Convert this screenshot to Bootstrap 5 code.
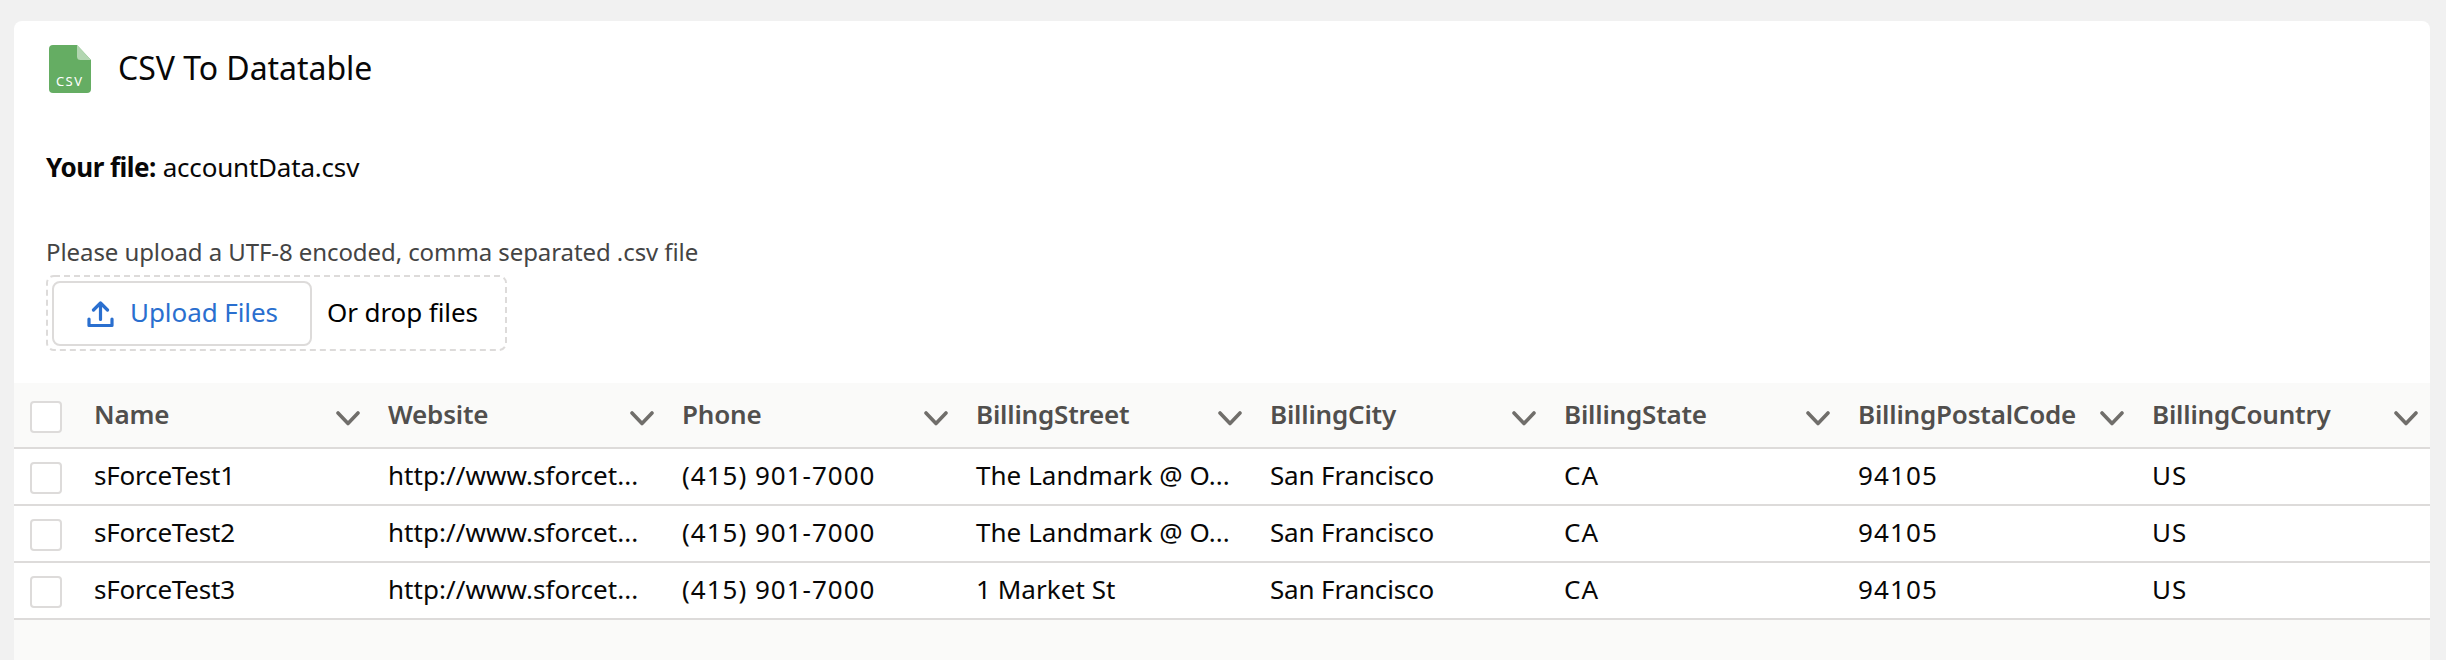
<!DOCTYPE html>
<html lang="en">
<head>
<meta charset="utf-8">
<meta name="viewport" content="width=device-width, initial-scale=1">
<title>CSV To Datatable</title>
<link href="https://cdn.jsdelivr.net/npm/bootstrap@5.3.0/dist/css/bootstrap.min.css" rel="stylesheet">
<style>
  body { background: #f1f1f1; font-family: "Noto Sans", sans-serif; font-size: 26px; line-height: 36px; color: #080707; overflow: hidden; }
  .panel { margin: 21px 16px 0 14px; height: 639px; border: 0; border-radius: 8px 8px 0 0; background: #fff; overflow: hidden; color: inherit; }
  .panel-head { height: 96px; padding: 24px 35px 0; gap: 27px; }
  .panel-title { font-size: 32px; line-height: 44px; font-weight: 400; margin: 1px 0 0; letter-spacing: -.03px; }
  .csv-label { font-size: 13px; letter-spacing: 1.4px; }
  .panel-main { height: 266px; padding: 32px 32px 0; }
  .file-tag { font-weight: 700; letter-spacing: -.5px; }
  .file-name { letter-spacing: -.2px; }
  .hint { font-size: 24px; line-height: 34px; color: #444; margin-top: 50px; letter-spacing: -.08px; }
  .dropzone { width: 461px; height: 76px; margin-top: 6px; }
  .dropzone > svg { z-index: 0; }
  .upload-btn { width: 260px; height: 65px; margin-left: 6px; border: 2px solid #dddbda; border-radius: 8px; background: #fff; color: #2a6fcf; font-size: 26px; line-height: 36px; padding: 0 0 2px 33px; gap: 16px; letter-spacing: -.07px; }
  .upload-btn svg { margin-top: 5px; }
  .drop-text { margin-left: 15px; padding-bottom: 2px; color: #000; letter-spacing: -.08px; }
  .grid-area { background: #fafaf9; flex: 1; }
  .data-grid { table-layout: fixed; margin: 0; color: #080707; border-collapse: separate; border-spacing: 0; --bs-table-bg: #fff; --bs-table-color: #080707; }
  .data-grid > :not(caption) > * > * { height: 57px; padding: 0 0 2px 16px; border-bottom: 2px solid #dddbda; white-space: nowrap; vertical-align: middle; box-shadow: none; }
  .data-grid > thead > tr > th { height: 66px; padding-bottom: 3px; background: #fafaf9; color: #514f4d; font-weight: 600; border-bottom-color: #dddbda; letter-spacing: -.2px; }
  .data-grid > tbody > tr > td { padding-bottom: 3px; letter-spacing: -.2px; }
  .data-grid .check-cell { padding: 3px 0 0 16px !important; line-height: 0; }
  .data-grid .form-check-input { width: 32px; height: 32px; margin: 0; border: 2px solid #dddbda; border-radius: 4px; background-color: #fff; float: none; }
  .chev { margin: 9px 11px 0 0; }
  .data-grid td.c-url, .data-grid td.c-street { letter-spacing: .05px; }
  .data-grid td.c-phone { letter-spacing: 1px; }
  .data-grid td.c-city { letter-spacing: -.15px; }
  .data-grid td.c-state, .data-grid td.c-country { letter-spacing: 1px; }
  .data-grid td.c-zip { letter-spacing: 1.1px; }
</style>
</head>
<body>
<svg class="d-none">
  <symbol id="chevron" viewBox="0 0 26 16"><path d="M3 3l10 10.500L23 3" fill="none" stroke="#706e6b" stroke-width="3.600" stroke-linecap="round" stroke-linejoin="round"/></symbol>
</svg>
<main class="card panel d-flex flex-column">
  <header class="panel-head d-flex align-items-start">
    <svg width="42" height="48" viewBox="0 0 42 48">
      <path d="M4 0H28L42 15V44a4 4 0 0 1-4 4H4a4 4 0 0 1-4-4V4a4 4 0 0 1 4-4z" fill="#65ad63"/>
      <path d="M28 0L42 15H31.500A3.500 3.500 0 0 1 28 11.500z" fill="#b2d6b1"/>
      <text class="csv-label" x="7" y="40.500" fill="#fff">CSV</text>
    </svg>
    <h1 class="panel-title">CSV To Datatable</h1>
  </header>
  <section class="panel-main">
    <div><strong class="file-tag">Your file:</strong> <span class="file-name">accountData.csv</span></div>
    <div class="hint">Please upload a UTF-8 encoded, comma separated .csv file</div>
    <div class="dropzone position-relative d-flex align-items-center">
      <svg class="position-absolute top-0 start-0" width="461" height="76"><rect x="1" y="1" width="459" height="74" rx="7" fill="none" stroke="#dddbda" stroke-width="2" stroke-dasharray="6 4"/></svg>
      <button type="button" class="btn upload-btn position-relative d-flex align-items-center">
        <svg width="27" height="27" viewBox="0 0 27 27" fill="none" stroke="#2a6fcf" stroke-linecap="round" stroke-linejoin="round">
          <path d="M6.500 9L13.500 2l7 7M13.500 2.500V18.500" stroke-width="3.200"/>
          <path d="M2 18V24.500H25V18" stroke-width="3.200"/>
        </svg>
        <span>Upload Files</span>
      </button>
      <span class="drop-text">Or drop files</span>
    </div>
  </section>
  <section class="grid-area">
    <table class="table data-grid">
      <colgroup><col style="width:64px"><col span="8"></colgroup>
      <thead><tr id="heads"></tr></thead>
      <tbody id="rows"></tbody>
    </table>
  </section>
</main>
<script src="https://cdn.jsdelivr.net/npm/bootstrap@5.3.0/dist/js/bootstrap.bundle.min.js"></script>
<script>
  const box = '<input class="form-check-input" type="checkbox">';
  const columns = ['Name', 'Website', 'Phone', 'BillingStreet', 'BillingCity', 'BillingState', 'BillingPostalCode', 'BillingCountry'];
  const styles = ['c-name', 'c-url', 'c-phone', 'c-street', 'c-city', 'c-state', 'c-zip', 'c-country'];
  const records = [
    ['sForceTest1', 'http://www.sforcet...', '(415) 901-7000', 'The Landmark @ O...', 'San Francisco', 'CA', '94105', 'US'],
    ['sForceTest2', 'http://www.sforcet...', '(415) 901-7000', 'The Landmark @ O...', 'San Francisco', 'CA', '94105', 'US'],
    ['sForceTest3', 'http://www.sforcet...', '(415) 901-7000', '1 Market St', 'San Francisco', 'CA', '94105', 'US']
  ];
  document.getElementById('heads').innerHTML = `<th class="check-cell">${box}</th>` + columns.map(c =>
    `<th><div class="d-flex align-items-center justify-content-between"><span>${c}</span><svg class="chev" width="26" height="16"><use href="#chevron"/></svg></div></th>`).join('');
  document.getElementById('rows').innerHTML = records.map(r =>
    `<tr><td class="check-cell">${box}</td>` + r.map((v, i) => `<td class="${styles[i]}">${v}</td>`).join('') + '</tr>').join('');
</script>
</body>
</html>
